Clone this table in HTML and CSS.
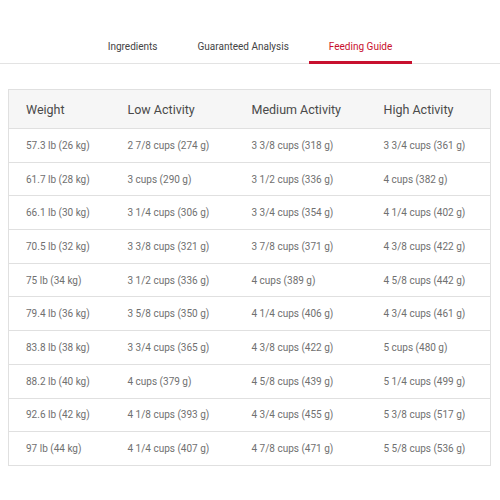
FILE: index.html
```html
<!DOCTYPE html>
<html>
<head>
<meta charset="utf-8">
<link rel="stylesheet" href="styles.css">
</head>
<body>
<nav class="tabs">
  <div class="tab">Ingredients</div>
  <div class="tab">Guaranteed Analysis</div>
  <div class="tab active">Feeding Guide</div>
</nav>
<div class="wrap">
<table class="feed">
  <colgroup><col class="c1"><col class="c2"><col class="c3"><col class="c4"></colgroup>
  <thead>
    <tr><th>Weight</th><th>Low Activity</th><th>Medium Activity</th><th>High Activity</th></tr>
  </thead>
  <tbody>
    <tr><td>57.3 lb (26 kg)</td><td>2 7/8 cups (274 g)</td><td>3 3/8 cups (318 g)</td><td>3 3/4 cups (361 g)</td></tr>
    <tr><td>61.7 lb (28 kg)</td><td>3 cups (290 g)</td><td>3 1/2 cups (336 g)</td><td>4 cups (382 g)</td></tr>
    <tr><td>66.1 lb (30 kg)</td><td>3 1/4 cups (306 g)</td><td>3 3/4 cups (354 g)</td><td>4 1/4 cups (402 g)</td></tr>
    <tr><td>70.5 lb (32 kg)</td><td>3 3/8 cups (321 g)</td><td>3 7/8 cups (371 g)</td><td>4 3/8 cups (422 g)</td></tr>
    <tr><td>75 lb (34 kg)</td><td>3 1/2 cups (336 g)</td><td>4 cups (389 g)</td><td>4 5/8 cups (442 g)</td></tr>
    <tr><td>79.4 lb (36 kg)</td><td>3 5/8 cups (350 g)</td><td>4 1/4 cups (406 g)</td><td>4 3/4 cups (461 g)</td></tr>
    <tr><td>83.8 lb (38 kg)</td><td>3 3/4 cups (365 g)</td><td>4 3/8 cups (422 g)</td><td>5 cups (480 g)</td></tr>
    <tr><td>88.2 lb (40 kg)</td><td>4 cups (379 g)</td><td>4 5/8 cups (439 g)</td><td>5 1/4 cups (499 g)</td></tr>
    <tr><td>92.6 lb (42 kg)</td><td>4 1/8 cups (393 g)</td><td>4 3/4 cups (455 g)</td><td>5 3/8 cups (517 g)</td></tr>
    <tr><td>97 lb (44 kg)</td><td>4 1/4 cups (407 g)</td><td>4 7/8 cups (471 g)</td><td>5 5/8 cups (536 g)</td></tr>
  </tbody>
</table>
</div>
</body>
</html>
```
FILE: styles.css
```css
html, body { margin: 0; padding: 0; background: #fff; }
body { font-family: Roboto, "Liberation Sans", sans-serif; color: #666; }
.tabs {
  display: flex;
  justify-content: center;
  margin-top: 37px;
  border-bottom: 1px solid #e3e3e3;
}
.tab {
  padding: 0 20px;
  height: 27px;
  line-height: 20px;
  font-size: 10px;
  color: #444;
  box-sizing: border-box;
  border-bottom: 3px solid transparent;
  margin-bottom: -1px;
}
.tab.active { color: #c8102e; border-bottom-color: #c8102e; }
.wrap { padding: 25px 10px 0 8px; }
.feed {
  width: 482px;
  border-collapse: collapse;
  border: 1px solid #e0e0e0;
  table-layout: fixed;
}
.c1 { width: 102px; }
.c2 { width: 124px; }
.c3 { width: 132px; }
.c4 { width: 124px; }
.feed th {
  background: #f6f6f6;
  height: 38px;
  text-align: left;
  font-weight: normal;
  font-size: 12.5px;
  color: #4a4a4a;
  padding: 0 0 0 17px;
  border-bottom: 1px solid #e0e0e0;
}
.feed td {
  height: 32.7px;
  padding: 0 0 0 17px;
  font-size: 10px;
  color: #707070;
  border-bottom: 1px solid #e0e0e0;
}
```
